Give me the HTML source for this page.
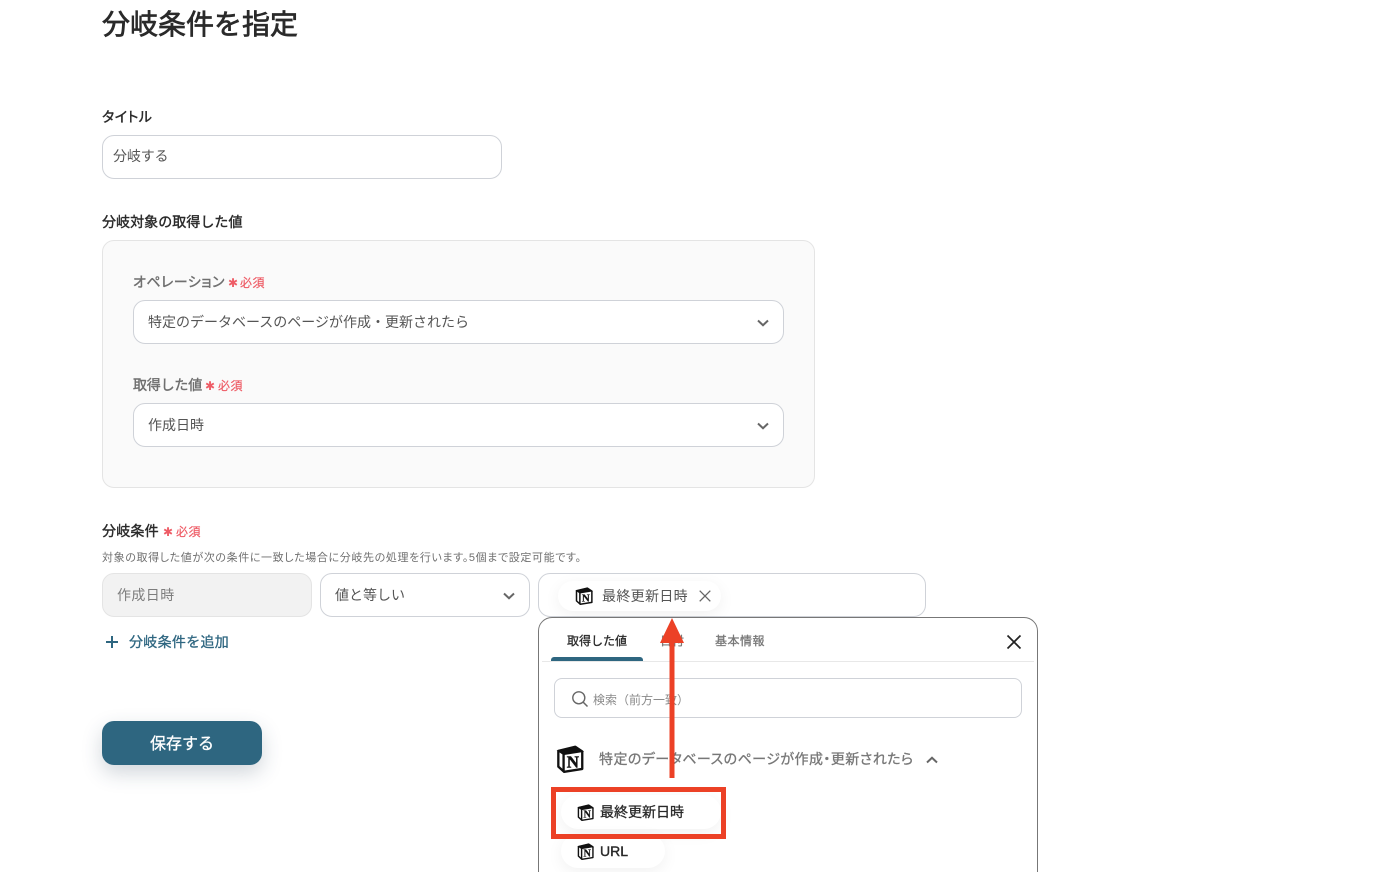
<!DOCTYPE html>
<html lang="ja"><head><meta charset="utf-8"><title>分岐条件を指定</title>
<style>
html,body{margin:0;padding:0;background:#fff;width:1386px;height:872px;overflow:hidden}
#p{width:1386px;height:872px;position:relative;overflow:hidden;font-family:"Liberation Sans","Noto Sans CJK JP",sans-serif;color:#2a2a2a}
.t{position:absolute;white-space:nowrap;line-height:20px;font-feature-settings:"palt"}
.b{position:absolute;box-sizing:border-box;background:#fff;border:1px solid #cfd2d8;border-radius:12px}
.m{-webkit-text-stroke:.3px currentColor}
.l{font-size:14px;color:#2a2a2a;-webkit-text-stroke:.4px currentColor}
.g{color:#6f6f6f}
.req{font-size:12px;color:#ee5c66;-webkit-text-stroke:.2px currentColor;letter-spacing:.5px}
.star{font-family:"DejaVu Sans",sans-serif;font-size:12px;color:#ee5c66}
.v{font-size:14px;color:#555}
svg{position:absolute;overflow:visible}
.chip{position:absolute;background:#fff;border-radius:20px;box-shadow:0 4px 16px rgba(0,0,0,.06)}
</style></head><body><div id="p">
<svg width="0" height="0" style="position:absolute"><defs>
<symbol id="n" viewBox="0 0 24 24"><path d="M2 5 16.5 1.5 22.5 5.5V20.5L7 23 2 18.5Z" fill="#fff" stroke="#111" stroke-width="2" stroke-linejoin="round"/><path d="M2 5 6.5 8 22.5 5.5 16.5 1.5Z" fill="#111" stroke="#111" stroke-width="1.2"/><path d="M6.5 8V23" stroke="#111" stroke-width="2"/><text x="14.4" y="19.4" font-family="Liberation Serif" font-weight="700" font-size="14.5" text-anchor="middle" fill="#111" stroke="#111" stroke-width=".4">N</text></symbol>
</defs></svg>

<div class="t" style="left:102px;top:5px;font-size:28px;line-height:40px;color:#2a2a2a;font-feature-settings:normal;-webkit-text-stroke:.7px currentColor">分岐条件を指定</div>

<div class="t l" style="left:102px;top:107px;letter-spacing:.5px">タイトル</div>
<div class="b" style="left:102px;top:135px;width:400px;height:44px"></div>
<div class="t v" style="left:113px;top:146px;font-feature-settings:normal;letter-spacing:-.15px">分岐する</div>

<div class="t l" style="left:102px;top:212px;font-feature-settings:normal;letter-spacing:.05px">分岐対象の取得した値</div>
<div class="b" style="left:102px;top:240px;width:713px;height:248px;background:#fafafa;border-color:#e4e4e4"></div>

<div class="t l g" style="left:133px;top:272px;letter-spacing:.45px">オペレーション</div>
<div class="t star" style="left:228px;top:273px">✱</div>
<div class="t req" style="left:240px;top:273px">必須</div>
<div class="b" style="left:133px;top:300px;width:651px;height:44px"></div>
<div class="t v" style="left:148px;top:312px;font-feature-settings:normal">特定のデータベースのページが作成・更新されたら</div>
<svg style="left:757px;top:319px" width="12" height="8"><path d="M1 1.5 6 6.2 11 1.5" fill="none" stroke="#666" stroke-width="2"/></svg>

<div class="t l g" style="left:133px;top:375px;font-feature-settings:normal;letter-spacing:-.2px">取得した値</div>
<div class="t star" style="left:205px;top:376px">✱</div>
<div class="t req" style="left:218px;top:376px">必須</div>
<div class="b" style="left:133px;top:403px;width:651px;height:44px"></div>
<div class="t v" style="left:148px;top:415px;font-feature-settings:normal">作成日時</div>
<svg style="left:757px;top:422px" width="12" height="8"><path d="M1 1.5 6 6.2 11 1.5" fill="none" stroke="#666" stroke-width="2"/></svg>

<div class="t l" style="left:102px;top:521px;font-feature-settings:normal;letter-spacing:.2px">分岐条件</div>
<div class="t star" style="left:163px;top:522px">✱</div>
<div class="t req" style="left:176px;top:522px">必須</div>
<div class="t" style="left:102px;top:547.5px;font-size:11px;color:#6f6f6f;letter-spacing:.62px">対象の取得した値が次の条件に一致した場合に分岐先の処理を行います。5個まで設定可能です。</div>

<div class="b" style="left:102px;top:573px;width:210px;height:44px;background:#f2f2f2;border-color:#e4e4e4"></div>
<div class="t" style="left:117px;top:585px;font-size:14px;color:#7d7d7d;font-feature-settings:normal;letter-spacing:.4px">作成日時</div>
<div class="b" style="left:320px;top:573px;width:210px;height:44px"></div>
<div class="t v" style="left:335px;top:585px;font-feature-settings:normal">値と等しい</div>
<svg style="left:503px;top:592px" width="12" height="8"><path d="M1 1.5 6 6.2 11 1.5" fill="none" stroke="#666" stroke-width="2"/></svg>
<div class="b" style="left:538px;top:573px;width:388px;height:44px"></div>
<div class="chip" style="left:558px;top:581px;width:163px;height:30px"></div>
<svg style="left:575px;top:587px" width="18" height="18"><use href="#n"/></svg>
<div class="t v" style="left:602px;top:586px;font-feature-settings:normal;letter-spacing:.33px">最終更新日時</div>
<svg style="left:699px;top:590px" width="12" height="12"><path d="M.7.7 11.3 11.3M11.3.7.7 11.3" stroke="#666" stroke-width="1.3"/></svg>

<svg style="left:106px;top:636px" width="12" height="12"><path d="M6 0V12M0 6H12" stroke="#2e6680" stroke-width="2"/></svg>
<div class="t m" style="left:129px;top:632px;font-size:14px;color:#2e6680;font-feature-settings:normal;letter-spacing:.3px">分岐条件を追加</div>

<div style="position:absolute;left:102px;top:721px;width:160px;height:44px;border-radius:12px;background:#2e6680;box-shadow:0 8px 20px rgba(46,70,90,.22)"></div>
<div class="t m" style="left:102px;top:734px;width:160px;text-align:center;font-size:16px;color:#fff;font-feature-settings:normal;line-height:22px">保存する</div>

<div class="b" style="left:538px;top:617px;width:500px;height:290px;border-color:#777;border-radius:14px"></div>
<div style="position:absolute;left:542px;top:661px;width:492px;height:1px;background:#e8e8e8"></div>
<div style="position:absolute;left:551px;top:657px;width:92px;height:4px;background:#2e6680;border-radius:3px 3px 0 0"></div>
<div class="t m" style="left:567px;top:631px;font-size:12px;color:#2a2a2a;font-feature-settings:normal">取得した値</div>
<div class="t m" style="left:660px;top:631px;font-size:12px;color:#777">日付</div>
<div class="t m" style="left:715px;top:631px;font-size:12px;color:#777;font-feature-settings:normal;letter-spacing:.5px">基本情報</div>
<svg style="left:1007px;top:635px" width="14" height="14"><path d="M.5.5 13.5 13.5M13.5.5.5 13.5" stroke="#222" stroke-width="1.7"/></svg>

<div class="b" style="left:554px;top:678px;width:468px;height:40px;border-radius:8px"></div>
<svg style="left:572px;top:691px" width="16" height="16"><circle cx="6.8" cy="6.8" r="6" fill="none" stroke="#666" stroke-width="1.4"/><path d="M11 11 15.5 15.5" stroke="#666" stroke-width="1.5"/></svg>
<div class="t" style="left:593px;top:690px;font-size:12px;color:#8a8a8a;font-feature-settings:normal">検索（前方一致）</div>

<svg style="left:556px;top:745px" width="28" height="28"><use href="#n"/></svg>
<div class="t m" style="left:599px;top:749px;font-size:14px;color:#777;letter-spacing:.45px">特定のデータベースのページが作成・更新されたら</div>
<svg style="left:926px;top:756px" width="12" height="8"><path d="M1 6.5 6 1.8 11 6.5" fill="none" stroke="#666" stroke-width="2"/></svg>

<div class="chip" style="left:561px;top:795px;width:160px;height:34px"></div>
<svg style="left:577px;top:804px" width="17" height="17"><use href="#n"/></svg>
<div class="t m" style="left:600px;top:802px;font-size:14px;color:#2a2a2a;font-feature-settings:normal">最終更新日時</div>
<div class="chip" style="left:561px;top:834px;width:104px;height:34px"></div>
<svg style="left:577px;top:843px" width="17" height="17"><use href="#n"/></svg>
<div class="t" style="left:600px;top:841px;font-size:14px;color:#2a2a2a;-webkit-text-stroke:.4px currentColor">URL</div>

<div style="position:absolute;left:551px;top:787px;width:175px;height:52px;box-sizing:border-box;border:5px solid #ec4126"></div>
<svg style="left:659.5px;top:618px" width="24" height="160"><path d="M12 0 24 25H14.5V160H9.5V25H0Z" fill="#ec4126"/></svg>
</div></body></html>
